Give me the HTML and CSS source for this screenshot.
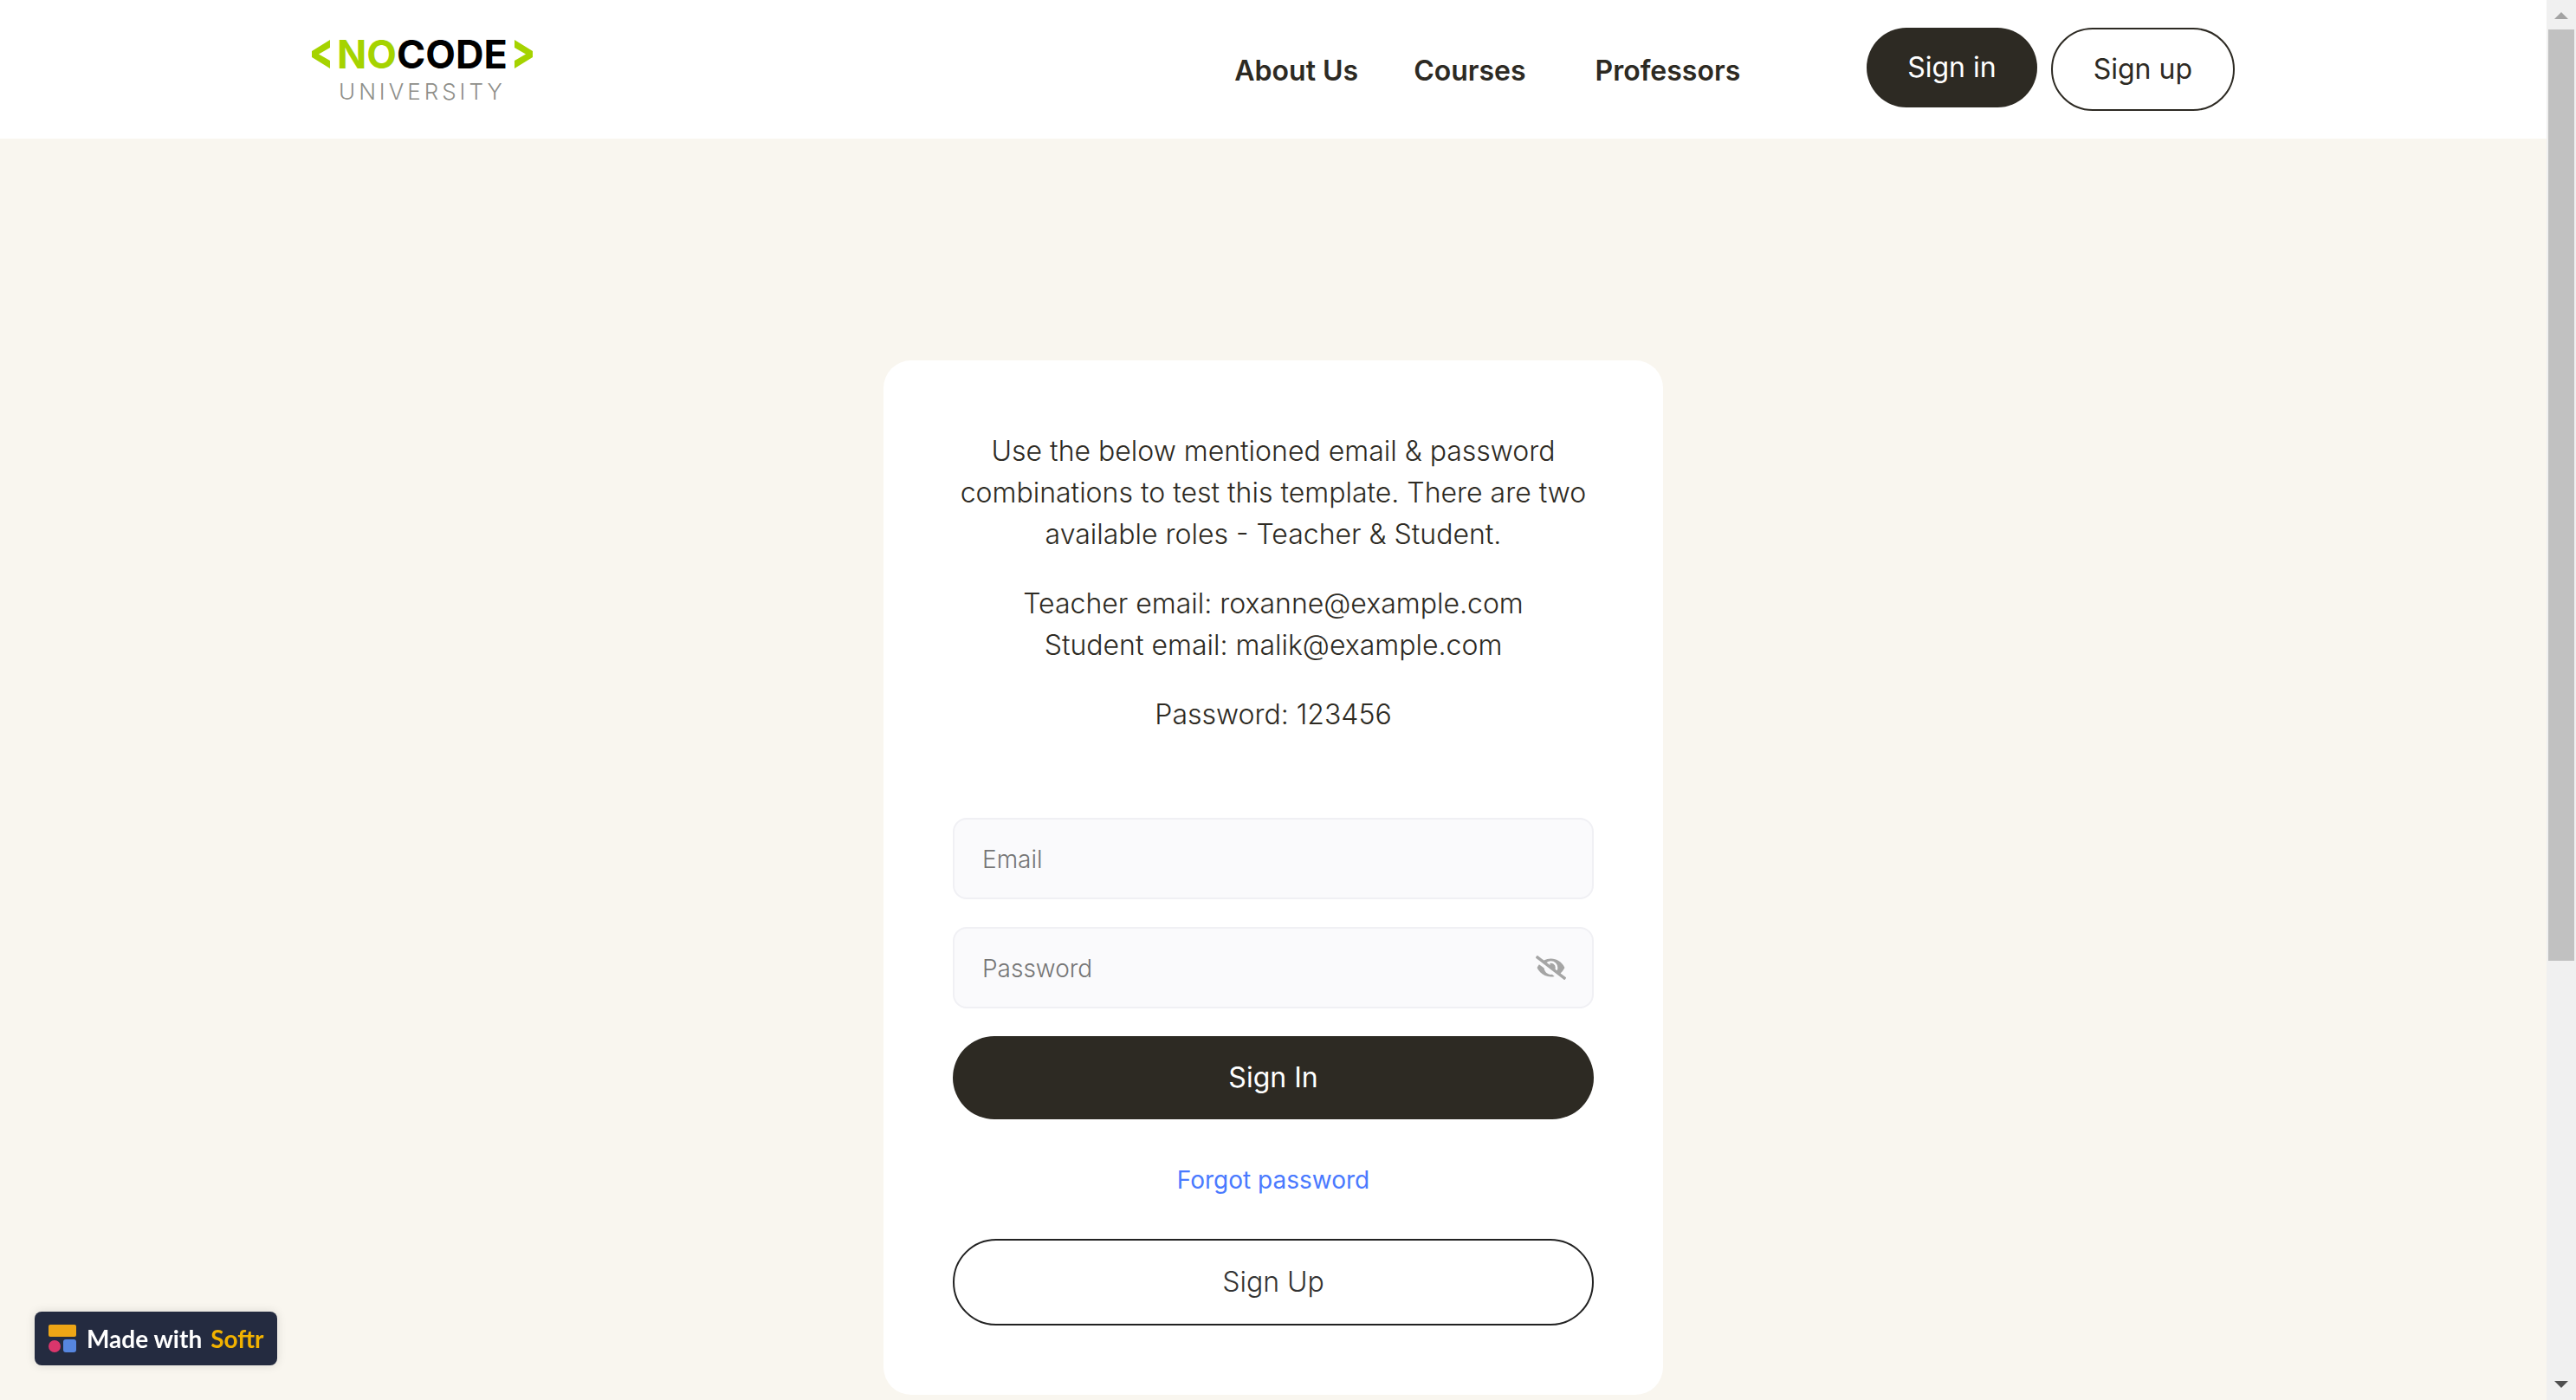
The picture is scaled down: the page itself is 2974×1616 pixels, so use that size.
FILE: index.html
```html
<!DOCTYPE html>
<html lang="en">
<head>
  <meta charset="utf-8">
  <meta name="viewport" content="width=device-width, initial-scale=1">
  <title>Sign in – NoCode University</title>
  <link rel="stylesheet" href="styles.css">
</head>
<body>
  <div class="page">
    <header class="header">
      <div class="header-inner">
        <a class="logo" href="#" aria-label="NoCode University">
          <svg class="logo-bracket" viewBox="0 0 21 33" aria-hidden="true"><path d="M21 0v9L8 16.500l13 7.500v9L0 20v-7z"/></svg>
          <span class="logo-words">
            <span class="logo-name"><span class="logo-accent">NO</span>CODE</span>
            <span class="logo-sub">UNIVERSITY</span>
          </span>
          <svg class="logo-bracket" viewBox="0 0 21 33" aria-hidden="true"><path d="M0 0v9l13 7.500L0 24v9l21-13v-7z"/></svg>
        </a>
        <nav class="nav">
          <div class="nav-group">
            <a class="nav-link" href="#">About Us</a>
            <a class="nav-link" href="#">Courses</a>
          </div>
          <a class="nav-link" href="#">Professors</a>
        </nav>
        <div class="header-actions">
          <button class="btn btn-dark btn-compact" type="button">Sign in</button>
          <button class="btn btn-outline" type="button">Sign up</button>
        </div>
      </div>
    </header>

    <main class="main">
      <section class="card">
        <div class="intro">
          <p>Use the below mentioned email &amp; password combinations to test this template. There are two available roles - Teacher &amp; Student.</p>
          <p>Teacher email: roxanne@example.com<br>Student email: malik@example.com</p>
          <p>Password: 123456</p>
        </div>
        <form class="form">
          <input class="field" type="email" placeholder="Email" aria-label="Email">
          <div class="password">
            <input class="field" type="password" placeholder="Password" aria-label="Password">
            <button class="reveal" type="button" aria-label="Show password">
              <svg viewBox="0 0 640 512" aria-hidden="true"><path d="M320 400c-75.850 0-137.250-58.710-142.900-133.110L72.200 185.820c-13.790 17.300-26.480 35.590-36.720 55.590a32.350 32.350 0 0 0 0 29.190C89.710 376.410 197.070 448 320 448c26.910 0 52.870-4 77.890-10.460L346 397.390a144.130 144.130 0 0 1-26 2.610zm313.820 58.100l-110.550-85.440a331.250 331.250 0 0 0 81.250-102.070 32.350 32.350 0 0 0 0-29.190C550.290 135.590 442.930 64 320 64a308.150 308.150 0 0 0-147.320 37.700L45.460 3.370A16 16 0 0 0 23 6.180L3.370 31.450A16 16 0 0 0 6.180 53.900l588.360 454.730a16 16 0 0 0 22.460-2.810l19.640-25.270a16 16 0 0 0-2.820-22.450zm-183.720-142l-39.300-30.380A94.750 94.750 0 0 0 416 256a94.760 94.760 0 0 0-121.310-92.210A47.650 47.650 0 0 1 304 192a46.640 46.640 0 0 1-1.540 10l-73.610-56.890A142.310 142.310 0 0 1 320 112a143.920 143.920 0 0 1 144 144c0 21.630-5.290 41.790-13.900 60.110z"/></svg>
            </button>
          </div>
          <button class="btn btn-dark" type="submit">Sign In</button>
        </form>
        <a class="forgot" href="#">Forgot password</a>
        <button class="btn btn-outline btn-tall" type="button">Sign Up</button>
      </section>
    </main>
  </div>

  <div class="scrollbar" aria-hidden="true">
    <svg class="arrow arrow-up" viewBox="0 0 16 8"><path d="M8 0l8 8H0z"/></svg>
    <div class="track"><div class="thumb"></div></div>
    <svg class="arrow arrow-down" viewBox="0 0 16 8"><path d="M0 0h16L8 8z"/></svg>
  </div>

  <a class="badge" href="#">
    <svg class="badge-icon" viewBox="0 0 32 32" aria-hidden="true">
      <rect width="32" height="14" rx="2" fill="#eea616"/>
      <circle cx="7" cy="25" r="7" fill="#da366c"/>
      <rect x="17" y="17" width="15" height="15" rx="3" fill="#5686e0"/>
    </svg>
    <span class="badge-text"><span>Made with</span><span class="badge-brand">Softr</span></span>
  </a>
</body>
</html>
```
FILE: styles.css
```css
*,
*::before,
*::after {
  box-sizing: border-box;
}

body {
  margin: 0;
  min-height: 100vh;
  display: grid;
  grid-template-columns: minmax(0, 1fr) 34px;
  background: #f9f6ef;
  color: #2d2a23;
  font-family: Inter, "Liberation Sans", sans-serif;
  font-size: 32px;
  line-height: 48px;
  font-weight: 300;
}

a {
  color: inherit;
  text-decoration: none;
}

button,
input {
  font: inherit;
  color: inherit;
}

/* Header */
.header {
  background: #fff;
  padding: 32px 24px;
}

.header-inner {
  max-width: 2220px;
  height: 96px;
  margin: 0 auto;
  display: flex;
  align-items: flex-start;
}

.logo {
  display: flex;
  align-items: flex-start;
  gap: 8px;
  padding-top: 8px;
  margin-right: auto;
}

.logo-bracket {
  width: 21px;
  height: 33px;
  margin-top: 6px;
  fill: #a5d300;
}

.logo-words {
  display: flex;
  flex-direction: column;
  align-items: center;
  gap: 4px;
}

.logo-name {
  color: #000;
  font-size: 45px;
  font-weight: 700;
  line-height: 46px;
}

.logo-accent {
  color: #a5d300;
}

.logo-sub {
  color: #8f8f8a;
  font-size: 26px;
  line-height: 32px;
  letter-spacing: 4px;
}

.nav {
  display: flex;
  gap: 80px;
  padding: 26px 0;
  margin-right: 146px;
}

.nav-group {
  display: flex;
  gap: 64px;
}

.nav-link {
  font-weight: 600;
}

.header-actions {
  display: flex;
  align-items: flex-start;
  gap: 16px;
}

/* Buttons */
.btn {
  padding: 24px 47px;
  border: 0;
  border-radius: 50px;
  line-height: 48px;
  font-weight: 400;
  cursor: pointer;
}

.btn-dark {
  background: #2d2a23;
  color: #fff;
}

.btn-compact {
  padding: 22px 47px;
}

.btn-outline {
  padding: 22px 47px;
  border: 2px solid #2d2a23;
  background: transparent;
}

.btn-tall {
  padding: 24px 47px;
  border-color: #222;
  color: #333;
  font-weight: 300;
}

/* Sign-in card */
.main {
  padding: 256px 24px 0;
}

.card {
  max-width: 900px;
  margin: 0 auto;
  padding: 80px;
  display: flex;
  flex-direction: column;
  background: #fff;
  border-radius: 32px;
}

.intro {
  display: grid;
  gap: 32px;
  padding-top: 1px;
  margin-bottom: 95px;
  text-align: center;
}

.intro p {
  margin: 0;
}

.form {
  display: grid;
  gap: 32px;
}

.field {
  display: block;
  width: 100%;
  height: 94px;
  padding: 2px 32px 0;
  border: 2px solid #f0f0f4;
  border-radius: 16px;
  background: #fafafc;
  font-size: 28px;
}

.field::placeholder {
  color: #757575;
  opacity: 1;
}

.password {
  display: grid;
  align-items: center;
}

.password > * {
  grid-area: 1 / 1;
}

.reveal {
  display: flex;
  justify-self: end;
  margin-right: 32px;
  padding: 0;
  border: 0;
  background: none;
  cursor: pointer;
}

.reveal svg {
  width: 35px;
  height: 28px;
  fill: #a5a5a5;
}

.forgot {
  align-self: center;
  margin: 49px 0 47px;
  color: #4a7aff;
  font-size: 28px;
  line-height: 42px;
  font-weight: 400;
}

/* Scroll bar */
.scrollbar {
  position: sticky;
  top: 0;
  height: 100vh;
  display: flex;
  flex-direction: column;
  align-items: center;
  gap: 12px;
  padding: 14px 0;
  background: #f0f0f0;
}

.arrow {
  width: 16px;
  height: 8px;
}

.arrow-up {
  fill: #a3a3a3;
}

.arrow-down {
  fill: #505050;
}

.track {
  flex: 1;
  align-self: stretch;
  display: grid;
  grid-template-rows: 25fr 11fr;
  padding: 0 2px;
}

.thumb {
  background: #c1c1c1;
}

/* Badge */
.badge {
  position: fixed;
  left: 40px;
  bottom: 40px;
  display: flex;
  align-items: center;
  gap: 12px;
  height: 62px;
  padding: 0 16px;
  border-radius: 8px;
  background: #242b40;
  box-shadow: 0 0 12px rgba(0, 0, 0, 0.12);
  color: #fff;
  font-family: Lato, "Open Sans", sans-serif;
  font-size: 28px;
  font-weight: 700;
}

.badge-icon {
  width: 32px;
  height: 32px;
}

.badge-text {
  display: flex;
  gap: 10px;
}

.badge-brand {
  color: #f2b200;
}
```
